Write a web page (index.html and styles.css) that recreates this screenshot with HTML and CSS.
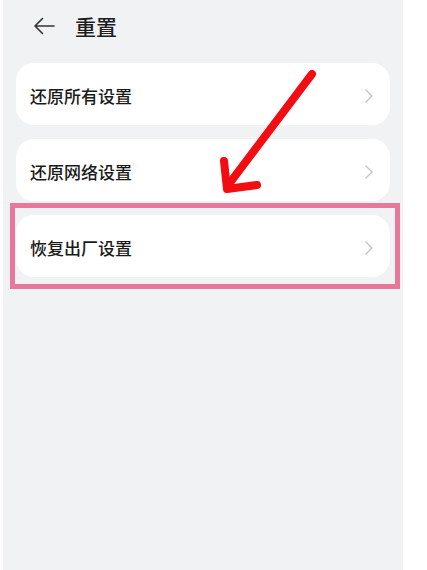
FILE: index.html
```html
<!DOCTYPE html>
<html lang="zh">
<head>
<meta charset="utf-8">
<link rel="stylesheet" href="styles.css">
</head>
<body>
<div class="panel">
  <div class="header">
    <svg class="back" width="22" height="18" viewBox="0 0 22 18">
      <path d="M21 9H2M9.5 1.5L2 9l7.5 7.5" fill="none" stroke="#333" stroke-width="1.6" stroke-linecap="round" stroke-linejoin="round"/>
    </svg>
    <span class="title">重置</span>
  </div>
  <div class="list">
    <div class="card"><span>还原所有设置</span><svg class="chev" width="8" height="14" viewBox="0 0 8 14"><path d="M1 1l6 6-6 6" fill="none" stroke="#c4c4c4" stroke-width="1.4" stroke-linecap="round" stroke-linejoin="round"/></svg></div>
    <div class="card"><span>还原网络设置</span><svg class="chev" width="8" height="14" viewBox="0 0 8 14"><path d="M1 1l6 6-6 6" fill="none" stroke="#c4c4c4" stroke-width="1.4" stroke-linecap="round" stroke-linejoin="round"/></svg></div>
    <div class="card highlighted"><span>恢复出厂设置</span><svg class="chev" width="8" height="14" viewBox="0 0 8 14"><path d="M1 1l6 6-6 6" fill="none" stroke="#c4c4c4" stroke-width="1.4" stroke-linecap="round" stroke-linejoin="round"/></svg>
      <div class="mark"></div>
    </div>
  </div>
  <svg class="arrow" width="110" height="140" viewBox="0 0 110 140">
    <path d="M97 8L14 118" fill="none" stroke="#f20d12" stroke-width="8" stroke-linecap="round"/>
    <path d="M9 95L12 123L42 119" fill="none" stroke="#f20d12" stroke-width="8" stroke-linecap="round" stroke-linejoin="round"/>
  </svg>
</div>
</body>
</html>
```

FILE: styles.css
```css
html, body {
  margin: 0;
  padding: 0;
  background: #ffffff;
}
body {
  font-family: "Noto Sans CJK SC", "Noto Sans", sans-serif;
  width: 427px;
  height: 570px;
  overflow: hidden;
}
.panel {
  position: relative;
  margin-left: 3px;
  width: 400px;
  height: 570px;
  background: #f1f2f4;
}
.header {
  height: 52px;
  display: flex;
  align-items: center;
  padding-left: 30px;
  gap: 20px;
}
.back {
  display: block;
}
.title {
  font-size: 21px;
  font-weight: 500;
  color: #1e1e1e;
  line-height: 1;
}
.list {
  padding: 11px 13px 0 13px;
  display: flex;
  flex-direction: column;
  gap: 14px;
}
.card {
  position: relative;
  height: 62px;
  background: #ffffff;
  border-radius: 18px;
  display: flex;
  align-items: center;
  justify-content: space-between;
  padding: 3px 17px 0 14px;
  box-sizing: border-box;
  font-size: 17px;
  font-weight: 500;
  color: #1a1a1a;
}
.chev {
  display: block;
}
.mark {
  position: absolute;
  left: -6px;
  top: -12px;
  width: 390px;
  height: 86px;
  box-sizing: border-box;
  border: 5px solid #e8789b;
}
.arrow {
  position: absolute;
  left: 212px;
  top: 66px;
}
```
